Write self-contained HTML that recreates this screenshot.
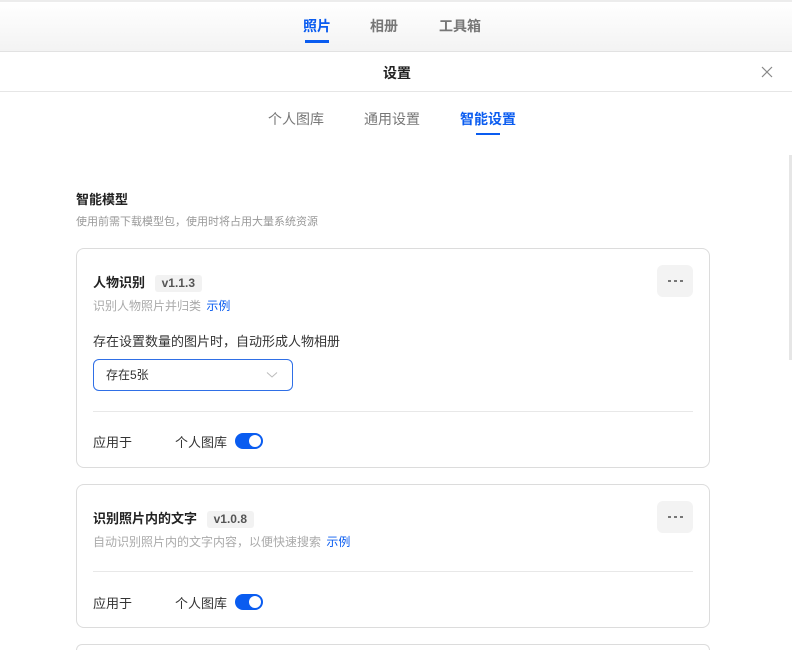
<!DOCTYPE html>
<html><head><meta charset="utf-8"><style>
*{margin:0;padding:0;box-sizing:border-box}
html,body{width:792px;height:650px;overflow:hidden}
body{background:#fff;font-family:"Liberation Sans","Noto Sans CJK SC",sans-serif;position:relative;color:#222}
.a{position:absolute;white-space:nowrap}
.top{position:absolute;left:0;top:0;width:792px;height:52px;background:linear-gradient(#fff,#f3f3f3);border-top:2px solid #ececec;border-bottom:1px solid #e2e2e2}
.modal{position:absolute;left:0;top:52px;width:792px;height:598px;background:#fff;border-radius:8px 8px 0 0}
.card{position:absolute;left:76px;width:634px;border:1px solid #dcdcdc;border-radius:8px;background:#fff}
.badge{display:inline-block;background:#f2f2f2;border-radius:3px;font-size:12px;font-weight:bold;color:#555;padding:0 7px;height:17px;line-height:17px}
.more{position:absolute;width:36px;height:32px;background:#f3f3f3;border-radius:6px;left:580px}
.more i{position:absolute;top:15px;width:3px;height:2px;background:#777}
.tog{position:absolute;width:28px;height:16px;background:#0a5cf0;border-radius:8px}
.tog:after{content:"";position:absolute;right:2px;top:2px;width:12px;height:12px;border-radius:50%;background:#fff}
.div{position:absolute;left:16px;width:600px;height:1px;background:#e8e8e8}
</style></head><body>
<div class="top"></div>
<div class="a" style="left:303px;top:16px;font-size:14px;font-weight:bold;color:#0a5cf0">照片</div>
<div class="a" style="left:305px;top:40px;width:24px;height:3px;background:#0a5cf0"></div>
<div class="a" style="left:370px;top:16px;font-size:14px;font-weight:bold;color:#777">相册</div>
<div class="a" style="left:439px;top:16px;font-size:14px;font-weight:bold;color:#777">工具箱</div>
<div class="modal"></div>
<div class="a" style="left:383px;top:63px;font-size:14px;font-weight:bold;color:#222">设置</div>
<svg class="a" style="left:761px;top:66px" width="12" height="12"><path d="M1 1L11 11M11 1L1 11" stroke="#888" stroke-width="1.2"/></svg>
<div class="a" style="left:0;top:91px;width:792px;height:1px;background:#e6e6e6"></div>
<div class="a" style="left:268px;top:109px;font-size:14px;color:#777">个人图库</div>
<div class="a" style="left:364px;top:109px;font-size:14px;color:#777">通用设置</div>
<div class="a" style="left:460px;top:109px;font-size:14px;font-weight:bold;color:#0a5cf0">智能设置</div>
<div class="a" style="left:476px;top:133px;width:24px;height:2px;background:#0a5cf0"></div>
<div class="a" style="left:789px;top:155px;width:3px;height:205px;background:#e6e6e6"></div>
<div class="a" style="left:76px;top:189px;font-size:13px;font-weight:bold">智能模型</div>
<div class="a" style="left:76px;top:213px;font-size:11px;color:#999">使用前需下载模型包，使用时将占用大量系统资源</div>

<div class="card" style="top:248px;height:220px">
<div class="a" style="left:16px;top:23px;font-size:13px;font-weight:bold">人物识别 <span class="badge" style="margin-left:6px">v1.1.3</span></div>
<div class="a" style="left:16px;top:48px;font-size:12px;color:#aaa">识别人物照片并归类 <span style="color:#0a5cf0;margin-left:2px">示例</span></div>
<div class="more" style="top:16px"><i style="left:11px"></i><i style="left:17px"></i><i style="left:23px"></i></div>
<div class="a" style="left:16px;top:82px;font-size:13px;color:#333">存在设置数量的图片时，自动形成人物相册</div>
<div class="a" style="left:16px;top:110px;width:200px;height:32px;border:1px solid #2f6fe6;border-radius:6px;font-size:12px;line-height:30px;padding-left:12px;color:#333">存在5张<svg style="position:absolute;left:172px;top:11px" width="12" height="8"><path d="M1 1.5L6 6L11 1.5" stroke="#bbb" fill="none" stroke-width="1"/></svg></div>
<div class="div" style="top:162px"></div>
<div class="a" style="left:16px;top:183px;font-size:13px;color:#333">应用于</div>
<div class="a" style="left:98px;top:183px;font-size:13px;color:#333">个人图库</div>
<div class="tog" style="left:158px;top:184px"></div>
</div>

<div class="card" style="top:484px;height:144px">
<div class="a" style="left:16px;top:23px;font-size:13px;font-weight:bold">识别照片内的文字 <span class="badge" style="margin-left:6px">v1.0.8</span></div>
<div class="a" style="left:16px;top:48px;font-size:12px;color:#aaa">自动识别照片内的文字内容，以便快速搜索 <span style="color:#0a5cf0;margin-left:2px">示例</span></div>
<div class="more" style="top:16px"><i style="left:11px"></i><i style="left:17px"></i><i style="left:23px"></i></div>
<div class="div" style="top:86px"></div>
<div class="a" style="left:16px;top:108px;font-size:13px;color:#333">应用于</div>
<div class="a" style="left:98px;top:108px;font-size:13px;color:#333">个人图库</div>
<div class="tog" style="left:158px;top:109px"></div>
</div>
<div class="card" style="top:644px;height:6px;border-bottom:none;border-radius:8px 8px 0 0"></div>
</body></html>
